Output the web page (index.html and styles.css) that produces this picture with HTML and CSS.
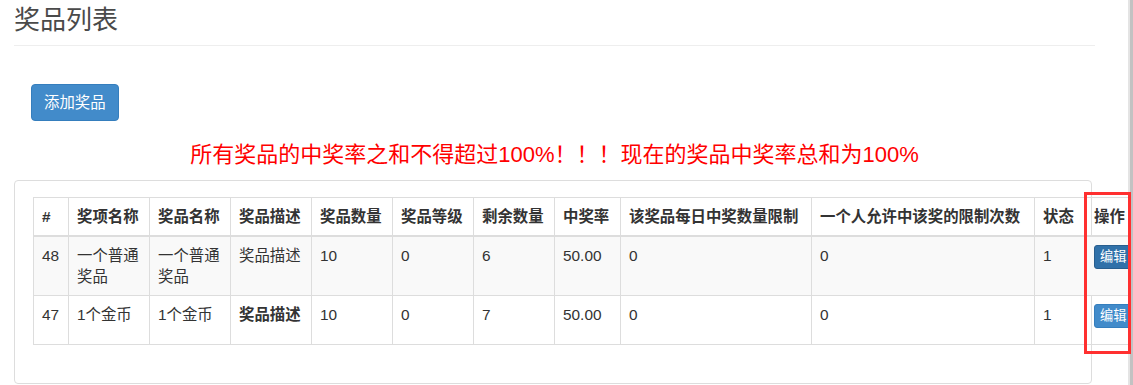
FILE: index.html
```html
<!DOCTYPE html>
<html lang="zh-CN">
<head>
    <meta charset="UTF-8">
    <meta name="viewport" content="width=device-width, initial-scale=1.0">
    <link rel="stylesheet" href="styles.css">
    <title>奖品列表</title>
</head>
<body>
    <div class="container">
        <div class="page-header">
            <h3>奖品列表</h3>
        </div>

        <div class="toolbar">
            <button class="btn btn-primary">添加奖品</button>
        </div>

        <p class="tip">所有奖品的中奖率之和不得超过100%！！！现在的奖品中奖率总和为100%</p>

        <div class="panel">
            <table class="table">
                <colgroup>
                    <col style="width:35px">
                    <col style="width:81px">
                    <col style="width:81px">
                    <col style="width:81px">
                    <col style="width:81px">
                    <col style="width:81px">
                    <col style="width:81px">
                    <col style="width:66px">
                    <col style="width:191px">
                    <col style="width:223px">
                    <col style="width:51px">
                    <col style="width:45px">
                </colgroup>
                <thead>
                    <tr>
                        <th>#</th>
                        <th>奖项名称</th>
                        <th>奖品名称</th>
                        <th>奖品描述</th>
                        <th>奖品数量</th>
                        <th>奖品等级</th>
                        <th>剩余数量</th>
                        <th>中奖率</th>
                        <th>该奖品每日中奖数量限制</th>
                        <th>一个人允许中该奖的限制次数</th>
                        <th>状态</th>
                        <th>操作</th>
                    </tr>
                </thead>
                <tbody>
                    <tr class="odd">
                        <td>48</td>
                        <td>一个普通奖品</td>
                        <td>一个普通奖品</td>
                        <td>奖品描述</td>
                        <td>10</td>
                        <td>0</td>
                        <td>6</td>
                        <td>50.00</td>
                        <td>0</td>
                        <td>0</td>
                        <td>1</td>
                        <td><button class="btn btn-primary btn-xs active">编辑</button></td>
                    </tr>
                    <tr>
                        <td>47</td>
                        <td>1个金币</td>
                        <td>1个金币</td>
                        <td><b>奖品描述</b></td>
                        <td>10</td>
                        <td>0</td>
                        <td>7</td>
                        <td>50.00</td>
                        <td>0</td>
                        <td>0</td>
                        <td>1</td>
                        <td><button class="btn btn-primary btn-xs">编辑</button></td>
                    </tr>
                </tbody>
            </table>
        </div>
    </div>

    <!-- 标注框 -->
    <div class="mark"></div>
    <div class="scrollbar"></div>
</body>
</html>
```

FILE: styles.css
```css
body {
    margin: 0;
    font-family: "Liberation Sans", "Noto Sans CJK SC", sans-serif;
    font-size: 15.4px;
    line-height: 21px;
    color: #333;
    background-color: #fff;
}
.container {
    width: 1081px;
    padding: 0 14px;
}
.page-header {
    height: 46px;
    box-sizing: border-box;
    border-bottom: 1px solid #eee;
}
.page-header h3 {
    margin: 0;
    font-size: 26px;
    font-weight: normal;
    line-height: 40px;
    color: #4a4a4a;
}

.toolbar {
    margin-top: 38px;
    padding-left: 17px;
}
.btn {
    font-family: inherit;
    font-size: 15.4px;
    line-height: 21px;
    padding: 7px 12px;
    border-radius: 4px;
    border: 1px solid transparent;
    cursor: pointer;
}
.btn-primary {
    color: #fff;
    background-color: #428bca;
    border-color: #357ebd;
}
.btn-primary.active {
    background-color: #3071a9;
    border-color: #285e8e;
}
.btn-xs {
    display: block;
    font-size: 13.2px;
    line-height: 20px;
    padding: 1px 5px;
    border-radius: 3px;
    margin-bottom: 8px;
    white-space: nowrap;
}

.tip {
    margin: 19px 0 10px;
    text-align: center;
    font-size: 22px;
    line-height: 30px;
    color: #ff0000;
}

.panel {
    border: 1px solid #ddd;
    border-radius: 4px;
    width: 1040px;
    padding: 16px 18px 38px;
}
.table {
    width: 1097px;
    table-layout: fixed;
    border-collapse: collapse;
}
.table th,
.table td {
    padding: 8px;
    border: 1px solid #ddd;
    text-align: left;
}
.table th {
    font-weight: bold;
    vertical-align: bottom;
    border-bottom-width: 2px;
    white-space: nowrap;
}
.table td {
    vertical-align: top;
}
.table tr.odd td {
    background-color: #f9f9f9;
}

.mark {
    position: absolute;
    z-index: 2;
    left: 1084px;
    top: 192px;
    width: 41px;
    height: 156px;
    border: 3px solid #ff3030;
}
.scrollbar {
    position: fixed;
    z-index: 1;
    top: 0;
    right: 0;
    bottom: 0;
    width: 5px;
    background: linear-gradient(to right, #e4e4e4 0, #e4e4e4 2px, #c2c2c2 2px);
}
```
